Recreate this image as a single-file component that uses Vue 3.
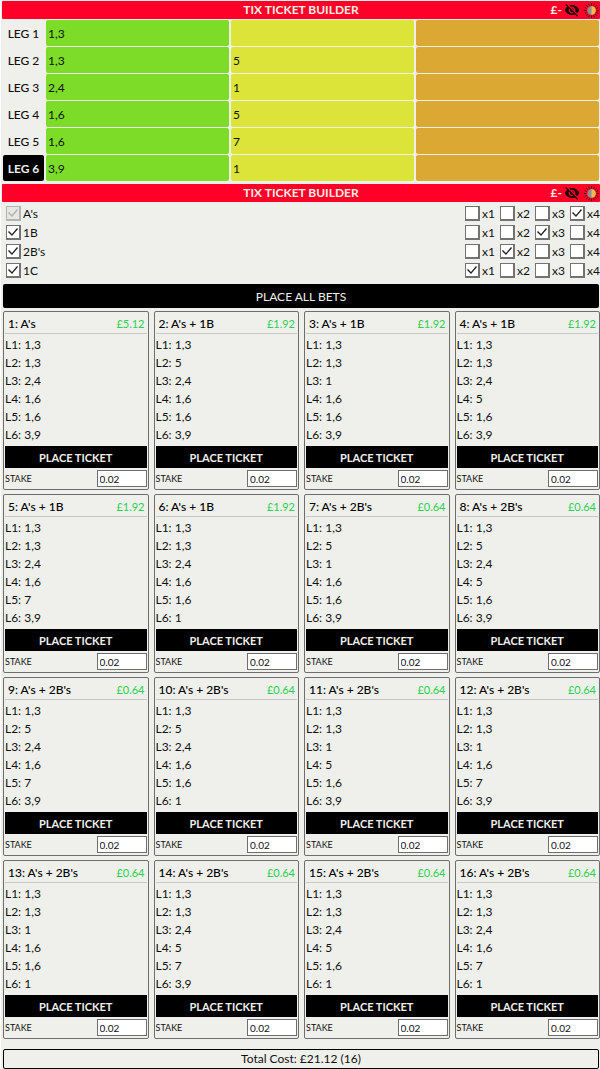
<template>
    <main class="page">
        <header class="titleBar">
            <h2>TIX TICKET BUILDER</h2>
            <div class="tools">
                <span>£-</span>
                <button type="button" aria-label="Hide balance">
                    <svg class="eye" viewBox="0 0 24 24"><path :d="eyePath" /></svg>
                </button>
                <button type="button" aria-label="Toggle theme">
                    <svg class="sun" viewBox="0 0 16 16">
                        <path class="rays" :d="rayPath" />
                        <circle cx="8" cy="8" r="4.5" />
                        <path class="half" d="M8 3.5a4.5 4.5 0 0 1 0 9z" />
                    </svg>
                </button>
            </div>
        </header>

        <section class="legs">
            <div v-for="(leg, i) in legs" :key="i" class="legRow">
                <button type="button" class="legName" :class="{ active: activeLeg === i }" @click="activeLeg = i">
                    LEG {{ i + 1 }}
                </button>
                <input v-model="leg.a" class="pickA" type="text" :aria-label="`Leg ${i + 1} A`" />
                <input v-model="leg.b" class="pickB" type="text" :aria-label="`Leg ${i + 1} B`" />
                <input v-model="leg.c" class="pickC" type="text" :aria-label="`Leg ${i + 1} C`" />
            </div>
        </section>

        <header class="titleBar">
            <h2>TIX TICKET BUILDER</h2>
            <div class="tools">
                <span>£-</span>
                <button type="button" aria-label="Hide balance">
                    <svg class="eye" viewBox="0 0 24 24"><path :d="eyePath" /></svg>
                </button>
                <button type="button" aria-label="Toggle theme">
                    <svg class="sun" viewBox="0 0 16 16">
                        <path class="rays" :d="rayPath" />
                        <circle cx="8" cy="8" r="4.5" />
                        <path class="half" d="M8 3.5a4.5 4.5 0 0 1 0 9z" />
                    </svg>
                </button>
            </div>
        </header>

        <section class="options">
            <div v-for="option in options" :key="option.name" class="optionRow">
                <label class="check">
                    <input v-model="option.on" type="checkbox" :disabled="option.locked" />
                    {{ option.name }}
                </label>
                <div class="multipliers">
                    <label v-for="n in 4" :key="n" class="check">
                        <input type="checkbox" :checked="option.times === n" @change="option.times = n" />
                        x{{ n }}
                    </label>
                </div>
            </div>
        </section>

        <button type="button" class="placeAll">PLACE ALL BETS</button>

        <section class="tickets">
            <article v-for="(ticket, i) in tickets" :key="i" class="ticket">
                <div class="ticketHead">
                    <h3>{{ i + 1 }}: {{ ticket.name }}</h3>
                    <span class="cost">£{{ ticket.cost }}</span>
                </div>
                <ul>
                    <li v-for="(pick, n) in ticket.picks" :key="n">L{{ n + 1 }}: {{ pick }}</li>
                </ul>
                <button type="button" class="place">PLACE TICKET</button>
                <div class="stake">
                    <label :for="`stake${i}`">STAKE</label>
                    <input :id="`stake${i}`" v-model="ticket.stake" type="text" />
                </div>
            </article>
        </section>

        <footer class="total">Total Cost: £{{ total }} ({{ tickets.length }})</footer>
    </main>
</template>

<script setup>
    import { ref, computed } from 'vue';

    const eyePath = 'M12 7c2.76 0 5 2.24 5 5 0 .65-.13 1.26-.36 1.83l2.92 2.92c1.51-1.26 2.7-2.89 3.43-4.75-1.73-4.39-6-7.5-11-7.5-1.4 0-2.74.25-3.98.7l2.16 2.16C10.74 7.13 11.35 7 12 7zM2 4.27l2.28 2.28.46.46C3.08 8.3 1.78 10.02 1 12c1.73 4.39 6 7.5 11 7.5 1.55 0 3.03-.3 4.38-.84l.42.42L19.73 22 21 20.73 3.27 3 2 4.27zM7.53 9.8l1.55 1.55c-.05.21-.08.43-.08.65 0 1.66 1.34 3 3 3 .22 0 .44-.03.65-.08l1.55 1.55c-.67.33-1.41.53-2.2.53-2.76 0-5-2.24-5-5 0-.79.2-1.53.53-2.2zm4.31-.78l3.15 3.15.02-.16c0-1.66-1.34-3-3-3l-.17.01z';
    const rayPath = 'M8 0v2.6M8 13.4V16M0 8h2.6M13.4 8H16M2.3 2.3l1.8 1.8M11.9 11.9l1.8 1.8M2.3 13.7l1.8-1.8M11.9 4.1l1.8-1.8M4.9.8l.9 2M10.2 13.2l.9 2M11.1.8l-.9 2M5.8 13.2l-.9 2M.8 4.9l2 .9M13.2 10.2l2 .9M.8 11.1l2-.9M13.2 5.8l2-.9';

    const activeLeg = ref(5);

    const legs = ref([
        { a: '1,3', b: '', c: '' },
        { a: '1,3', b: '5', c: '' },
        { a: '2,4', b: '1', c: '' },
        { a: '1,6', b: '5', c: '' },
        { a: '1,6', b: '7', c: '' },
        { a: '3,9', b: '1', c: '' }
    ]);

    const options = ref([
        { name: "A's", on: true, locked: true, times: 4 },
        { name: '1B', on: true, locked: false, times: 3 },
        { name: "2B's", on: true, locked: false, times: 2 },
        { name: '1C', on: true, locked: false, times: 1 }
    ]);

    // legs (1-6) that use the B selection in each ticket
    const combos = [
        [], [2], [3], [4],
        [5], [6], [2, 3], [2, 4],
        [2, 5], [2, 6], [3, 4], [3, 5],
        [3, 6], [4, 5], [4, 6], [5, 6]
    ];
    const names = ["A's", "A's + 1B", "A's + 2B's"];
    const costs = ['5.12', '1.92', '0.64'];

    const tickets = ref(combos.map((combo) => ({
        name: names[combo.length],
        cost: costs[combo.length],
        picks: legs.value.map((leg, i) => (combo.includes(i + 1) ? leg.b : leg.a)),
        stake: '0.02'
    })));

    const total = computed(() => {
        return tickets.value.reduce((sum, ticket) => sum + Number(ticket.cost), 0).toFixed(2);
    });
</script>

<style>
    body {
        margin: 0;
        background-color: #ffffff;
    }
</style>

<style scoped>
    * {
        box-sizing: border-box;
    }

    .page {
        display: flex;
        flex-direction: column;
        margin-left: 1px;
        padding: 1px 0 0 1px;
        background-color: #eff0eb;
        color: #111111;
        font-family: Lato, sans-serif;
        font-size: 12px;
    }

    button,
    input {
        margin: 0;
        border: none;
        font-family: inherit;
        color: inherit;
    }

    button {
        padding: 0;
        cursor: pointer;
    }

    h2,
    h3,
    ul {
        margin: 0;
        padding: 0;
    }

    .titleBar {
        display: grid;
        grid-template-columns: 1fr auto 1fr;
        align-items: center;
        height: 18px;
        border-radius: 1px;
        background-color: #ff0029;
        color: #f6efe0;
    }

    .titleBar h2 {
        grid-column: 2;
        font-size: 12px;
        font-weight: bold;
        line-height: 18px;
    }

    .tools {
        display: flex;
        justify-content: flex-end;
        align-items: center;
        gap: 2px;
        font-size: 12px;
        font-weight: bold;
        line-height: 18px;
    }

    .tools button {
        display: flex;
        background: none;
    }

    .tools svg {
        width: 16px;
        height: 16px;
    }

    .eye {
        fill: #1a0508;
    }

    .tools .sun {
        width: 15px;
        height: 15px;
        margin: 0 1px 0 2px;
        fill: #8b8f91;
    }

    .sun .rays {
        fill: none;
        stroke: #33100c;
        stroke-width: 1;
    }

    .sun .half {
        fill: #f0bd4a;
    }

    .legs {
        display: flex;
        flex-direction: column;
        gap: 1px;
        padding: 1px 1px 3px;
    }

    .legRow {
        display: grid;
        grid-template-columns: 41px 1fr 1fr 1fr;
        column-gap: 2px;
        height: 26px;
    }

    .legRow input {
        min-width: 0;
        padding: 0 2px;
        border-radius: 2px;
        font-size: 12px;
    }

    .legName {
        border-radius: 2px;
        background: none;
        font-size: 12px;
        font-weight: 500;
    }

    .legName.active {
        background-color: #000000;
        color: #eff0eb;
        font-weight: bold;
    }

    .pickA {
        background-color: #7cdc28;
    }

    .pickB {
        background-color: #dce43a;
    }

    .pickC {
        background-color: #dca834;
    }

    .options {
        display: flex;
        flex-direction: column;
        gap: 4px;
        padding: 4px 0 6px 4px;
    }

    .optionRow {
        display: flex;
        justify-content: space-between;
    }

    .multipliers {
        display: flex;
        gap: 5px;
    }

    .multipliers .check {
        width: 30px;
    }

    .check {
        display: flex;
        align-items: center;
        gap: 2px;
        font-size: 12px;
        line-height: 15px;
        white-space: nowrap;
    }

    .check input {
        display: block;
        flex: none;
        width: 15px;
        height: 15px;
        border: solid #737373;
        border-width: 1px 2px 2px 1px;
        background-color: #ffffff;
        appearance: none;
    }

    .check input:checked::before {
        content: "";
        display: block;
        width: 12px;
        height: 12px;
        background-color: #222222;
        clip-path: polygon(1px 6px, 2px 5px, 5px 8px, 10px 2px, 11px 3px, 5px 10px);
    }

    .check input:disabled {
        border-color: #b4b4b4;
        background-color: #e6e7e3;
    }

    .check input:disabled::before {
        background-color: #b0b0b0;
    }

    .placeAll {
        height: 24px;
        margin: 0 1px;
        border-radius: 2px;
        background-color: #000000;
        color: #eff0eb;
        font-size: 12px;
    }

    .tickets {
        display: grid;
        grid-template-columns: repeat(4, 1fr);
        gap: 4px 5px;
        margin: 3px 0 10px 1px;
    }

    .ticket {
        padding: 1px;
        border: 1px solid #6e6e6e;
        border-radius: 2px;
    }

    .ticketHead {
        display: flex;
        justify-content: space-between;
        align-items: center;
        height: 21px;
        padding: 0 2px 0 3px;
        border-bottom: 1px solid #c8c9c5;
    }

    .ticketHead h3 {
        font-size: 12px;
        font-weight: 500;
        color: #000000;
    }

    .cost {
        font-size: 11px;
        color: #2bd14e;
    }

    .ticket ul {
        padding: 2px 0;
        list-style: none;
    }

    .ticket li {
        font-size: 12px;
        line-height: 18px;
    }

    .place {
        display: block;
        width: 100%;
        height: 22px;
        background-color: #000000;
        color: #eff0eb;
        font-size: 11px;
        font-weight: bold;
    }

    .stake {
        display: flex;
        justify-content: space-between;
        align-items: center;
        padding: 2px 0 1px;
        font-size: 9px;
    }

    .stake input {
        width: 50px;
        height: 17px;
        padding: 0 2px;
        border: 1px solid #6e6e6e;
        background-color: #ffffff;
        font-size: 10px;
    }

    .total {
        margin: 0 1px;
        border: 1px solid #000000;
        border-radius: 2px;
        font-size: 12px;
        line-height: 18px;
        text-align: center;
    }
</style>
